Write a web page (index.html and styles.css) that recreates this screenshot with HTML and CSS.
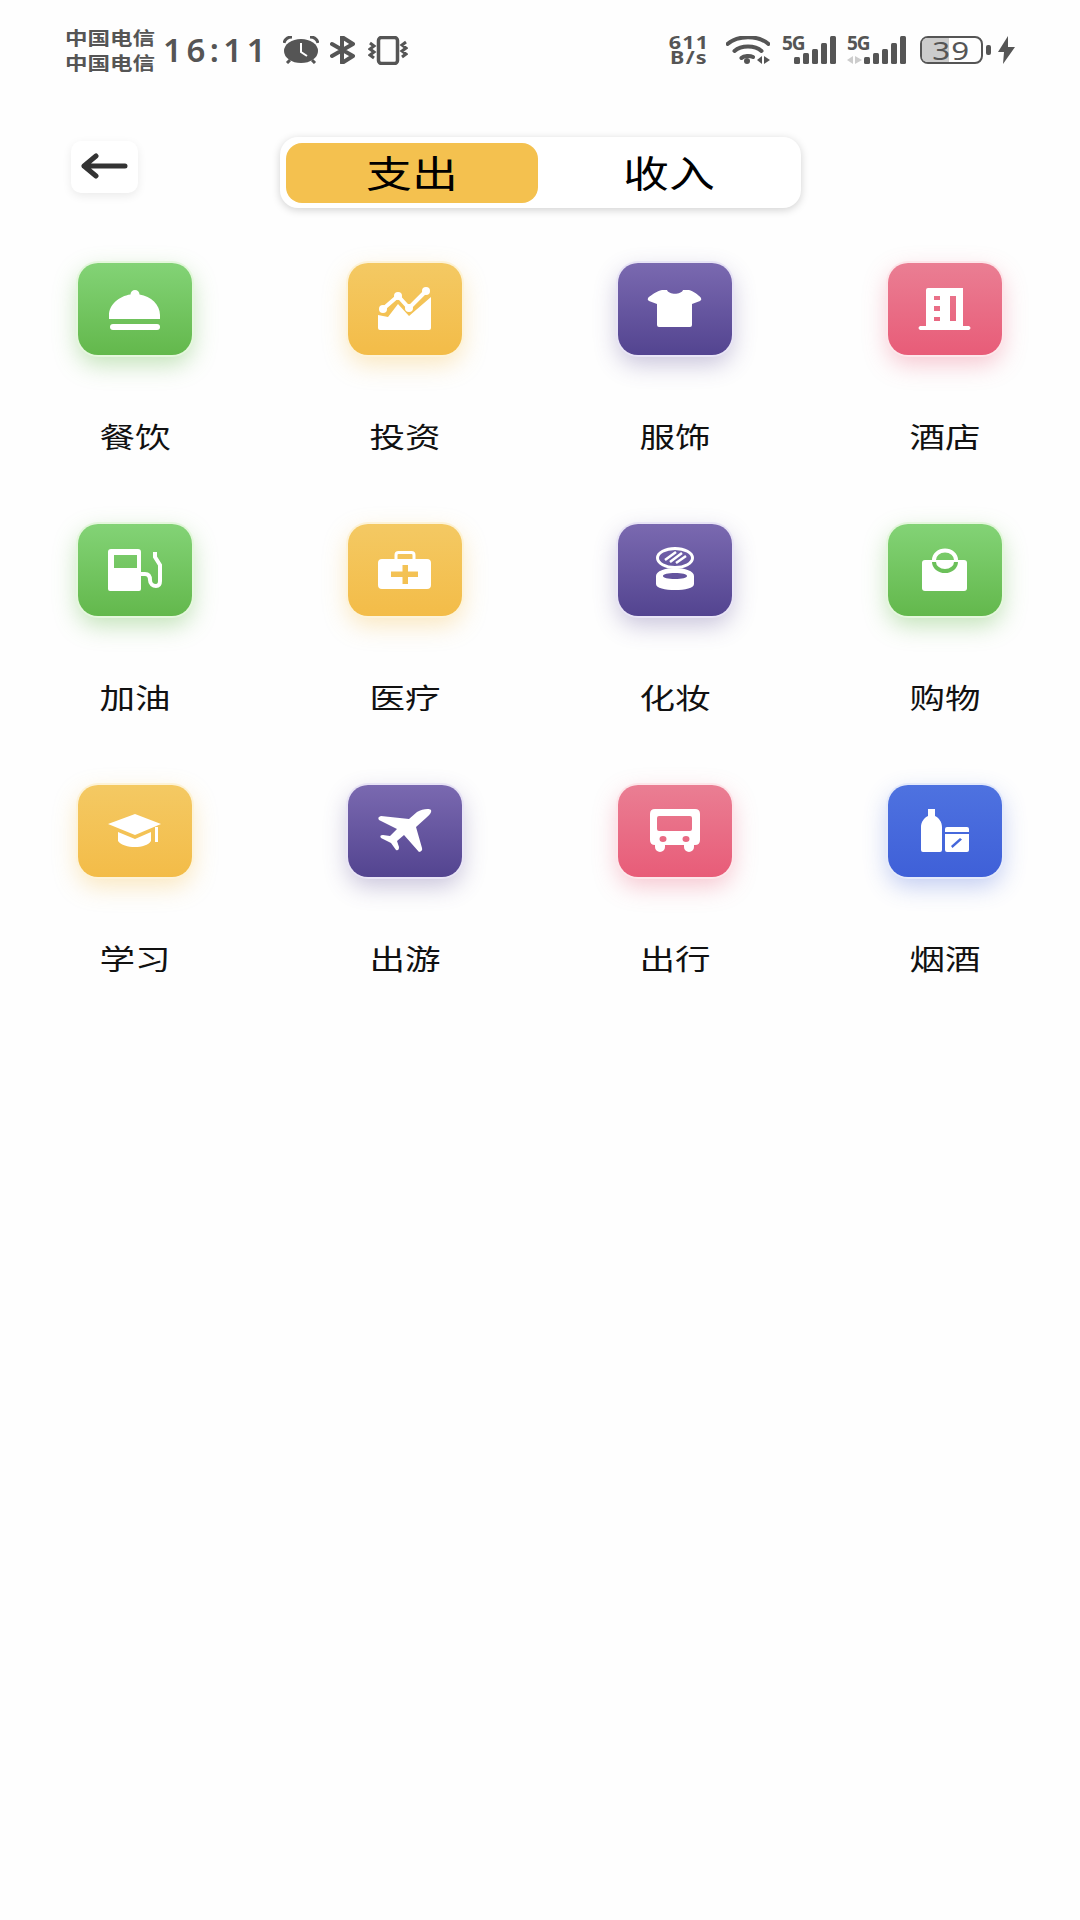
FILE: index.html
```html
<!DOCTYPE html>
<html lang="zh-CN">
<head>
    <meta charset="UTF-8">
    <meta name="viewport" content="width=device-width, initial-scale=1.0">
    <title>记账</title>
    <link rel="stylesheet" href="styles.css">
</head>
<body>
    <div class="status-bar">
        <div class="status-left">
            <div class="carrier"><span>中国电信</span><span>中国电信</span></div>
            <div class="time">16:11</div>
            <svg class="st-icon alarm" viewBox="0 0 36 28">
                <ellipse cx="18" cy="15" rx="17" ry="12" fill="#555"/>
                <path d="M18 7v9l6 4" fill="none" stroke="#fff" stroke-width="2"/>
                <path d="M1 7C2 3 5 1 9 1M35 7C34 3 31 1 27 1" fill="none" stroke="#555" stroke-width="3"/>
                <path d="M7 24l-3 3M29 24l3 3" stroke="#555" stroke-width="3"/>
            </svg>
            <svg class="st-icon bluetooth" viewBox="0 0 25 28">
                <path d="M2 8L23 20L12 27V1L23 8L2 20" fill="none" stroke="#555" stroke-width="4" stroke-linecap="round" stroke-linejoin="round"/>
            </svg>
            <svg class="st-icon vibrate" viewBox="0 0 40 29">
                <rect x="10.5" y="1.5" width="19" height="26" rx="3" fill="none" stroke="#555" stroke-width="3.5"/>
                <path d="M2 7l4 3-4 3 4 3-4 3 4 3M38 6l-4 3 4 3-4 3 4 3-4 3" fill="none" stroke="#555" stroke-width="3"/>
            </svg>
        </div>
        <div class="status-right">
            <div class="speed">611<br>B/s</div>
            <svg class="st-icon wifi" viewBox="0 0 44 28">
                <path d="M1.5 8C12-1 32-1 42.500 8M8.500 15C15 9 29 9 35.500 15M15.500 22C18 19.500 24 19.500 27 21" fill="none" stroke="#555" stroke-width="4" stroke-linecap="round"/>
                <circle cx="21" cy="25" r="3" fill="#555"/>
                <path d="M36 20v8l-5-4zM38 20v8l6-4z" fill="#555"/>
            </svg>
            <div class="signal">
                <span class="net">5G</span>
                <svg class="st-icon bars" viewBox="0 0 54 28">
                    <rect x="12" y="21" width="6" height="7" rx="1.500"/>
                    <rect x="21" y="17" width="6" height="11" rx="1.500"/>
                    <rect x="30" y="13" width="6" height="15" rx="1.500"/>
                    <rect x="39" y="7" width="6" height="21" rx="1.500"/>
                    <rect x="48" y="0" width="6" height="28" rx="1.500"/>
                </svg>
            </div>
            <div class="signal signal-second">
                <span class="net">5G</span>
                <svg class="st-icon bars" viewBox="0 0 60 28">
                    <path d="M7 20v8l-6-4zM9 20v8l7-4z" fill="#ccc"/>
                    <rect x="18" y="21" width="6" height="7" rx="1.500"/>
                    <rect x="27" y="17" width="6" height="11" rx="1.500"/>
                    <rect x="36" y="13" width="6" height="15" rx="1.500"/>
                    <rect x="45" y="7" width="6" height="21" rx="1.500"/>
                    <rect x="54" y="0" width="6" height="28" rx="1.500"/>
                </svg>
            </div>
            <div class="battery"><div class="battery-fill"></div><span>39</span></div>
            <div class="battery-tip"></div>
            <svg class="st-icon bolt" viewBox="0 0 17 28">
                <path d="M10 0L0 16h6l-1 12L17 11h-7z" fill="#555"/>
            </svg>
        </div>
    </div>

    <div class="header">
        <button class="back-button">
            <svg viewBox="0 0 47 28" class="back-arrow">
                <path d="M3 13H44M15 3L3 13L15 23" fill="none" stroke="#333" stroke-width="5" stroke-linecap="round" stroke-linejoin="round"/>
            </svg>
        </button>
        <div class="tabs">
            <div class="tab active"><span>支出</span></div>
            <div class="tab"><span>收入</span></div>
        </div>
    </div>

    <div class="category-grid">
        <div class="category">
            <div class="tile green">
                <svg viewBox="0 0 114 92"><path d="M31 56V52C31 42 41 33 52.500 31.500A4.500 4.500 0 1 1 61.500 31.500C73 33 82 42 82 52V56Z"/><rect x="32" y="61" width="50" height="6" rx="3"/></svg>
            </div>
            <div class="label"><span>餐饮</span></div>
        </div>
        <div class="category">
            <div class="tile yellow">
                <svg viewBox="0 0 114 92"><path d="M30 52L40 54L50 41L61 53L83 34V65Q83 67 81 67H32Q30 67 30 65Z"/><path d="M35 46L50 33L61 45L78 28" fill="none" stroke="#fff" stroke-width="4"/><circle cx="35" cy="46" r="4"/><circle cx="50" cy="33" r="4"/><circle cx="61" cy="45" r="4"/><circle cx="78" cy="28" r="4"/></svg>
            </div>
            <div class="label"><span>投资</span></div>
        </div>
        <div class="category">
            <div class="tile purple">
                <svg viewBox="0 0 114 92"><path d="M44 27H49C51 32 63 32 65 27H71C75 28 81 32 83 35Q84 37 82 38L74 41V62Q74 64 72 64H41Q39 64 39 62V41L31 38Q29 37 30 35C33 32 39 28 44 27Z"/></svg>
            </div>
            <div class="label"><span>服饰</span></div>
        </div>
        <div class="category">
            <div class="tile pink">
                <svg viewBox="0 0 114 92"><path fill-rule="evenodd" d="M40 25H75V63H81Q84 65 81 67H32Q29 65 32 63H38V27Q38 25 40 25ZM46 33V37H52V33ZM46 43V48H52V43ZM46 54V58H52V54ZM62 33V58H68V33Z"/></svg>
            </div>
            <div class="label"><span>酒店</span></div>
        </div>

        <div class="category">
            <div class="tile green">
                <svg viewBox="0 0 114 92"><path fill-rule="evenodd" d="M33 25H60Q63 25 63 28V65Q63 67 61 67H32Q30 67 30 65V28Q30 25 33 25ZM36 31V44H59V31Z"/><path d="M63 50H67C71 50 72 53 72 56C72 60 75 62 78 62C81 62 82 60 82 57V41L77 33V28" fill="none" stroke="#fff" stroke-width="4"/></svg>
            </div>
            <div class="label"><span>加油</span></div>
        </div>
        <div class="category">
            <div class="tile yellow">
                <svg viewBox="0 0 114 92"><rect x="48" y="28.500" width="18" height="10" rx="2.500" fill="none" stroke="#fff" stroke-width="3"/><path fill-rule="evenodd" d="M34 35H79Q83 35 83 39V61Q83 65 79 65H34Q30 65 30 61V39Q30 35 34 35ZM54.500 41V47.500H43V53H54.500V60H60V53H70V47.500H60V41Z"/></svg>
            </div>
            <div class="label"><span>医疗</span></div>
        </div>
        <div class="category">
            <div class="tile purple">
                <svg viewBox="0 0 114 92"><ellipse cx="57" cy="34" rx="17.500" ry="9.500" fill="none" stroke="#fff" stroke-width="3"/><path d="M47 36L58 28M52 38L64 29M58 39L68 32" stroke="#fff" stroke-width="2.600"/><path fill-rule="evenodd" d="M38 52C38 47 47 44 57 44C67 44 76 47 76 52V60C76 64 67 66 57 66C47 66 38 64 38 60ZM45 52C45 54 50 55 57 55C64 55 69 54 69 52C69 50 64 49 57 49C50 49 45 50 45 52Z"/></svg>
            </div>
            <div class="label"><span>化妆</span></div>
        </div>
        <div class="category">
            <div class="tile green">
                <svg viewBox="0 0 114 92"><rect x="34" y="36" width="45" height="31" rx="3"/><path d="M46 36A11 9.500 0 0 1 68 36" fill="none" stroke="#fff" stroke-width="4"/><path d="M46 38A11 9 0 0 0 68 38" fill="none" stroke="#6cc05a" stroke-width="4"/></svg>
            </div>
            <div class="label"><span>购物</span></div>
        </div>

        <div class="category">
            <div class="tile yellow">
                <svg viewBox="0 0 114 92"><path d="M30 39L57 29L83 39L57 50Z"/><path d="M40 47L57 54L73 47V56C68 64 46 64 40 56Z"/><rect x="77" y="42" width="3" height="15"/></svg>
            </div>
            <div class="label"><span>学习</span></div>
        </div>
        <div class="category">
            <div class="tile purple">
                <svg viewBox="0 0 114 92"><path d="M83 25C81 23 74 24 69 27L61 34L33 31Q29 32 31 35L49 44L42 51L35 50Q31 50 33 53L43 58L48 65Q51 66 51 62L49 56L56 50L71 67Q75 66 74 63L68 42L78 33C81 30 84 28 83 25Z"/></svg>
            </div>
            <div class="label"><span>出游</span></div>
        </div>
        <div class="category">
            <div class="tile pink">
                <svg viewBox="0 0 114 92"><path fill-rule="evenodd" d="M37 24H77Q82 24 82 29V55Q82 60 77 60H37Q32 60 32 55V29Q32 24 37 24ZM41 31Q39 31 39 33V44Q39 46 41 46H72Q74 46 74 44V33Q74 31 72 31ZM45 51A3.500 3 0 1 0 45 57A3.500 3 0 1 0 45 51ZM68 51A3.500 3 0 1 0 68 57A3.500 3 0 1 0 68 51Z"/><path d="M37 59H47V62A5 5 0 0 1 37 62ZM66 59H76V62A5 5 0 0 1 66 62Z"/></svg>
            </div>
            <div class="label"><span>出行</span></div>
        </div>
        <div class="category">
            <div class="tile blue">
                <svg viewBox="0 0 114 92"><path d="M40 24H47V31C51 33 54 37 54 42V65Q54 67 52 67H35Q33 67 33 65V42C33 37 36 33 40 31Z"/><path fill-rule="evenodd" d="M59 42H79Q81 42 81 44V47H57V44Q57 42 59 42ZM57 49H81V65Q81 67 79 67H59Q57 67 57 65ZM63 61L64.500 63L74 54.500L72 53Z"/></svg>
            </div>
            <div class="label"><span>烟酒</span></div>
        </div>
    </div>
</body>
</html>
```

FILE: styles.css
```css
body {
    margin: 0;
    background-color: #fefefe;
    font-family: "Noto Sans CJK SC", "Noto Sans", sans-serif;
    color: #111;
}

.status-bar {
    display: flex;
    justify-content: space-between;
    align-items: center;
    height: 100px;
    padding: 0 65px;
    color: #555;
}

.status-left,
.status-right {
    display: flex;
    align-items: center;
}

.st-icon {
    display: block;
}

.carrier {
    display: flex;
    flex-direction: column;
    width: 90px;
    font-size: 18px;
    font-weight: 700;
    line-height: 25px;
}

.carrier span {
    transform: scaleX(1.25);
    transform-origin: left center;
    white-space: nowrap;
}

.time {
    width: 102px;
    margin-left: 8px;
    font-family: "Noto Sans", sans-serif;
    font-size: 33px;
    font-weight: 600;
    letter-spacing: 4.5px;
    line-height: 40px;
    white-space: nowrap;
}

.alarm {
    width: 36px;
    height: 28px;
    margin-left: 18px;
}

.bluetooth {
    width: 25px;
    height: 28px;
    margin-left: 11px;
}

.vibrate {
    width: 40px;
    height: 29px;
    margin-left: 13px;
}

.speed {
    width: 38px;
    font-family: "Noto Sans", sans-serif;
    font-size: 18px;
    font-weight: 700;
    line-height: 15px;
    letter-spacing: 1px;
    text-align: center;
    transform: scaleX(1.2);
}

.wifi {
    width: 44px;
    height: 28px;
    margin-left: 18px;
}

.signal {
    position: relative;
    width: 54px;
    height: 28px;
    margin-left: 12px;
}

.signal-second {
    width: 60px;
    margin-left: 10px;
}

.bars {
    width: 100%;
    height: 28px;
    fill: #555;
}

.net {
    position: absolute;
    top: -3px;
    left: 0;
    font-family: "Noto Sans", sans-serif;
    font-size: 19px;
    font-weight: 700;
    line-height: 20px;
    letter-spacing: -1px;
}

.signal-second .net {
    left: 1px;
}

.battery {
    position: relative;
    display: flex;
    justify-content: center;
    align-items: center;
    box-sizing: border-box;
    width: 63px;
    height: 28px;
    margin-left: 14px;
    border: 2.5px solid #555;
    border-radius: 8px;
}

.battery-fill {
    position: absolute;
    top: 0;
    bottom: 0;
    left: 0;
    width: 45%;
    border-radius: 5px 0 0 5px;
    background-color: #ccc;
}

.battery span {
    position: relative;
    font-family: "Noto Sans", sans-serif;
    font-size: 25px;
    line-height: 23px;
    letter-spacing: 1px;
    transform: scaleX(1.25);
}

.battery-tip {
    width: 5px;
    height: 10px;
    margin-left: 3px;
    border-radius: 2px;
    background-color: #555;
}

.bolt {
    width: 17px;
    height: 28px;
    margin-left: 7px;
}

.header {
    display: flex;
    align-items: flex-start;
    gap: 142px;
    margin-top: 37px;
    padding-left: 71px;
}

.back-button {
    display: flex;
    justify-content: center;
    align-items: center;
    width: 67px;
    height: 52px;
    margin-top: 4px;
    padding: 0;
    border: none;
    border-radius: 10px;
    background-color: #fff;
    box-shadow: 0 3px 10px rgba(0, 0, 0, 0.08);
}

.back-arrow {
    width: 47px;
    height: 28px;
}

.tabs {
    display: flex;
    box-sizing: border-box;
    width: 521px;
    height: 71px;
    padding: 6px 7px 5px 6px;
    border-radius: 18px;
    background-color: #fff;
    box-shadow: 0 2px 8px rgba(0, 0, 0, 0.18);
}

.tab {
    display: flex;
    justify-content: center;
    align-items: center;
    width: 252px;
    border-radius: 16px;
    font-size: 37px;
    line-height: 50px;
    color: #000;
}

.tab span {
    margin-top: -3px;
    transform: scaleX(1.24);
}

.tab + .tab {
    flex: 1;
    padding-left: 5px;
}

.tab.active {
    background-color: #f4c14f;
}

.category-grid {
    display: grid;
    grid-template-columns: repeat(4, 270px);
    grid-auto-rows: 261px;
    margin-top: 55px;
}

.category {
    display: flex;
    flex-direction: column;
    align-items: center;
}

.tile {
    width: 114px;
    height: 92px;
    border-radius: 20px;
}

.tile svg {
    display: block;
    fill: #fff;
}

.green {
    background: linear-gradient(#83d376, #63b84c);
    box-shadow: 0 0 0 2px #e4f7dc, 0 9px 24px rgba(99, 184, 76, 0.4);
}

.yellow {
    background: linear-gradient(#f4c963, #f3bc48);
    box-shadow: 0 0 0 2px #fdf3d8, 0 9px 24px rgba(243, 188, 72, 0.35);
}

.purple {
    background: linear-gradient(#7a69b0, #534490);
    box-shadow: 0 0 0 2px #e8e4f6, 0 9px 24px rgba(83, 68, 144, 0.32);
}

.pink {
    background: linear-gradient(#ea7e93, #e85c78);
    box-shadow: 0 0 0 2px #fde6ea, 0 9px 24px rgba(232, 92, 120, 0.35);
}

.blue {
    background: linear-gradient(#4e72e0, #3f60d8);
    box-shadow: 0 0 0 2px #e4eafb, 0 9px 24px rgba(63, 96, 216, 0.32);
}

.label {
    margin-top: 63px;
    font-size: 28px;
    line-height: 36px;
}

.label span {
    display: inline-block;
    transform: scaleX(1.27);
}
```
